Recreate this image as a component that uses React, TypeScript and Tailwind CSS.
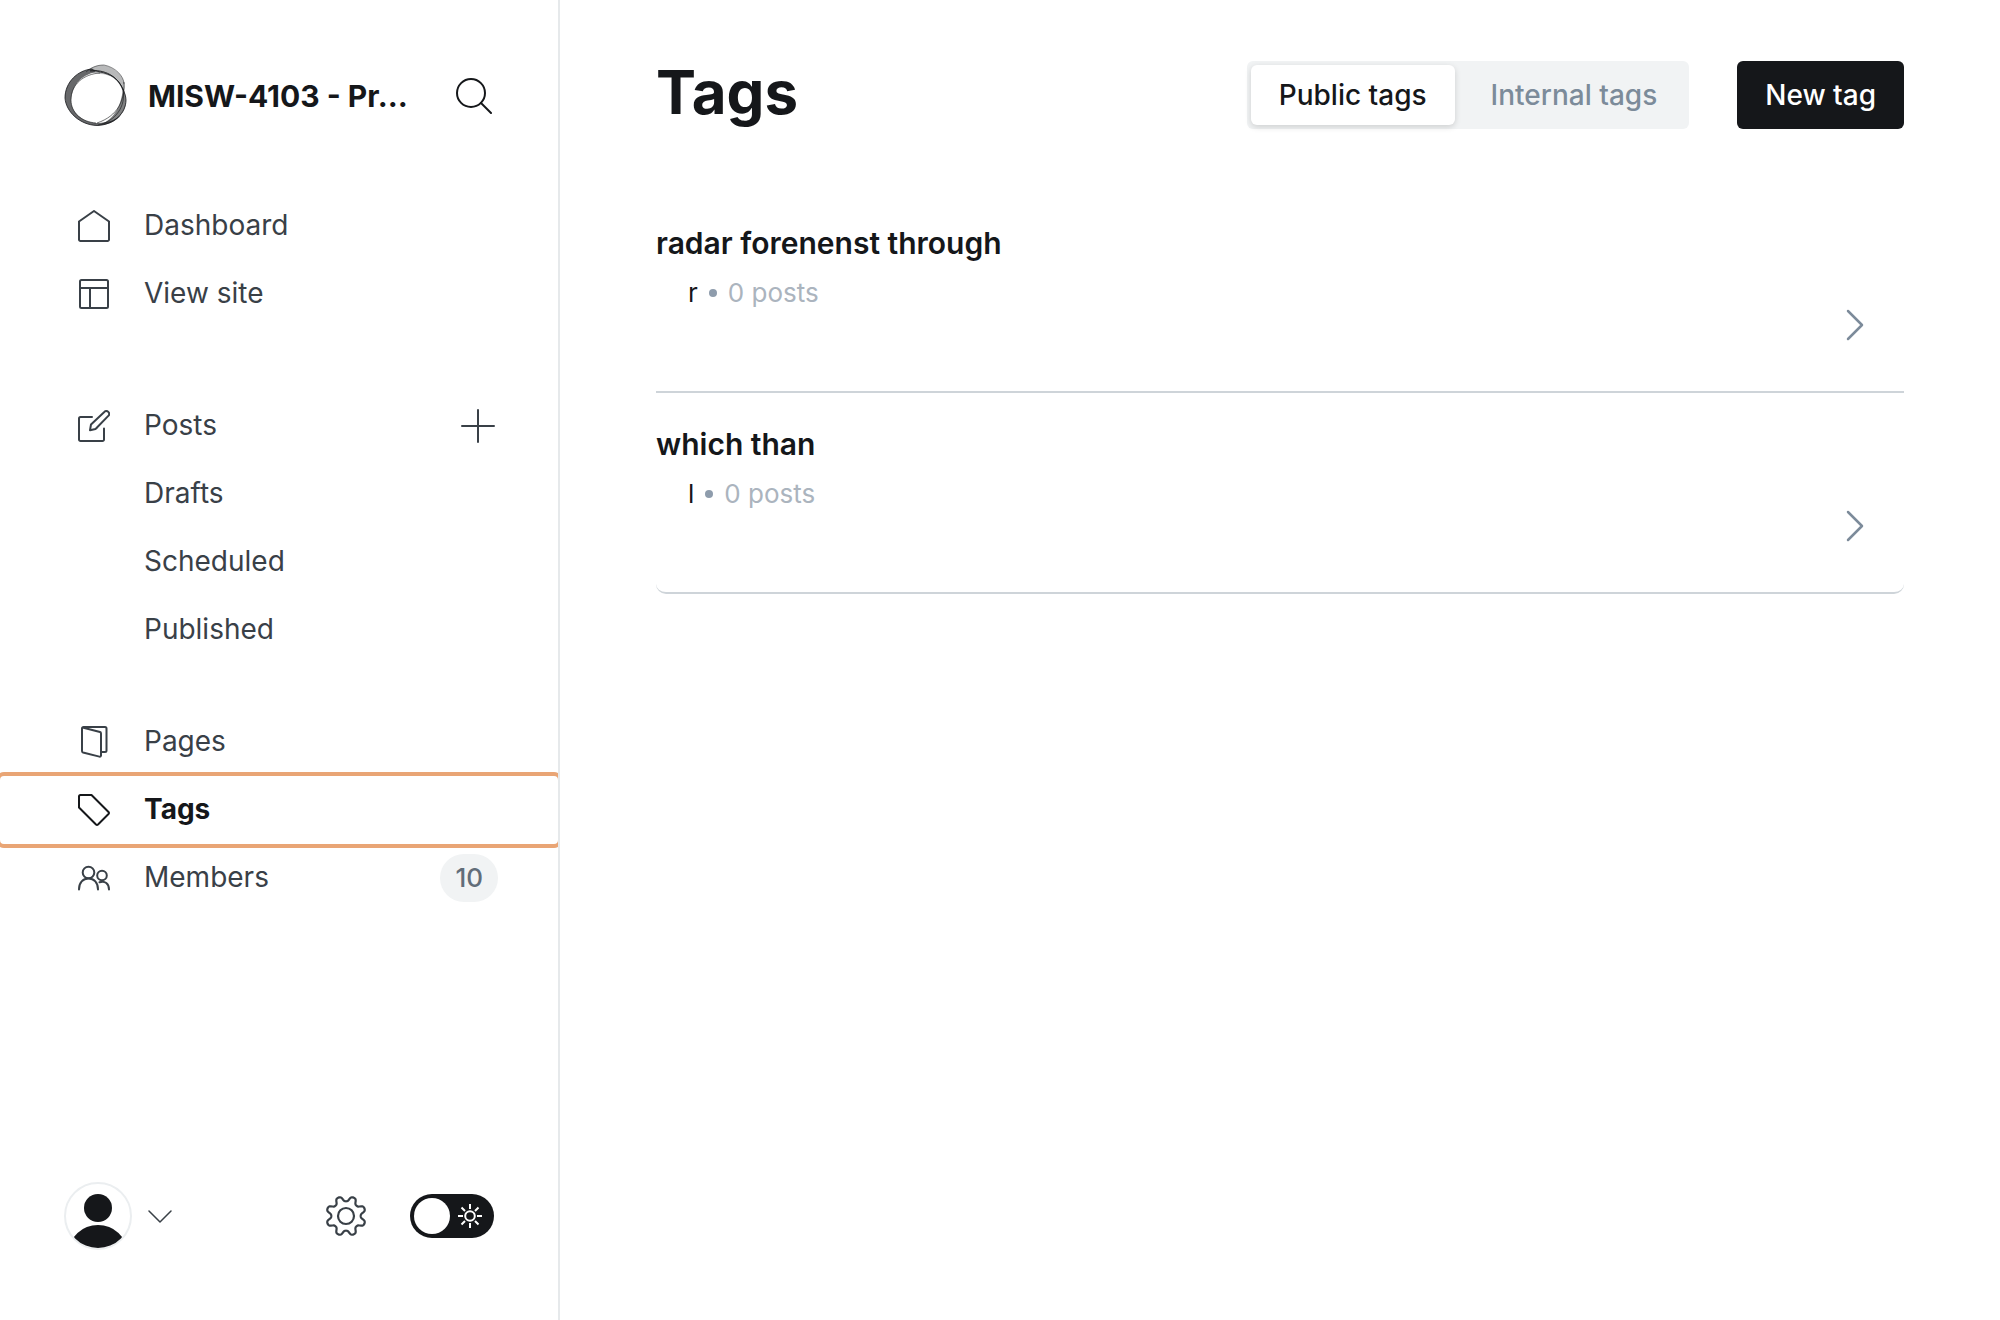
import { useState, type ReactNode } from "react";

const iconProps = {
  viewBox: "0 0 32 32",
  fill: "none",
  stroke: "currentColor",
  strokeWidth: 2,
  strokeLinecap: "round" as const,
  strokeLinejoin: "round" as const,
  className: "size-8 shrink-0",
  "aria-hidden": true,
};

const HomeIcon = () => (
  <svg {...iconProps}>
    <path d="M16 1 31 11.5V29.5a1.5 1.5 0 0 1-1.5 1.5h-27A1.5 1.5 0 0 1 1 29.5V11.5Z" />
  </svg>
);
const SiteIcon = () => (
  <svg {...iconProps}>
    <rect x="2" y="2" width="28" height="28" rx="1.5" />
    <path d="M2 10h28M12 10v20" />
  </svg>
);
const PostsIcon = () => (
  <svg {...iconProps}>
    <path d="M14 7H2.500A1.500 1.500 0 0 0 1 8.500v21A1.500 1.500 0 0 0 2.500 31h22a1.500 1.500 0 0 0 1.500-1.500V18.500" />
    <path d="M19.200 17.500 17.500 19l-5.500 1.200 1-5.700L26.300 1.900a2.800 2.800 0 0 1 4 4L18.500 18" />
  </svg>
);
const PagesIcon = () => (
  <svg {...iconProps}>
    <path d="M5.500 1.800 22 6a1.500 1.500 0 0 1 1 1.400v22a1.200 1.200 0 0 1-1.600 1.200L5 26.500a1.500 1.500 0 0 1-1-1.400V2.500A1.500 1.500 0 0 1 5.500 1H27A1.500 1.500 0 0 1 28.500 2.500v22a1.500 1.500 0 0 1-1.500 1.500H23.500" />
  </svg>
);
const TagIcon = () => (
  <svg {...iconProps}>
    <path d="M1 2.500A1.500 1.500 0 0 1 2.500 1h11L30.500 18a1.500 1.500 0 0 1 0 2L20 30.500a1.500 1.500 0 0 1-2 0L1 13.500Z" />
  </svg>
);
const MembersIcon = () => (
  <svg {...iconProps}>
    <circle cx="10.500" cy="10.500" r="5.800" />
    <path d="M1 27.500c0-7 4-11 9.500-11s9.500 4 9.500 11" />
    <circle cx="24" cy="13.500" r="4.800" />
    <path d="M21.500 20.300c5.500-2 9.500 1.500 9.500 7.200" />
  </svg>
);

const gearPath = (() => {
  const pts: string[] = [];
  const n = 144;
  for (let i = 0; i <= n; i++) {
    const a = (i / n) * Math.PI * 2;
    const w = Math.tanh(1.6 * Math.cos(8 * a + Math.PI)) / Math.tanh(1.6);
    const r = 17.3 + 2.6 * w;
    pts.push(`${(20 + r * Math.cos(a)).toFixed(2)} ${(20 + r * Math.sin(a)).toFixed(2)}`);
  }
  return "M" + pts.join("L") + "Z";
})();

function Logo() {
  return (
    <svg viewBox="0 0 60 60" className="size-15 shrink-0 overflow-visible" fill="none" stroke="#15171a" aria-hidden="true">
      <g fill="#15171a" stroke="none">
        <path fillOpacity="0.65" d="M26 3C12 4-1 16-1 32C0 46 14 59 31 59.500C40 59.500 50 56 55 49C48 55 40 57 30 57C16 56 5 46 5 34C6 20 14 9 30 6Z" />
        <path fillOpacity="0.3" d="M22 4C27 0 32-1 37-1C46 0 56 8 58 16C59 20 59 23 57 26C53 14 45 8 34 8C30 7 26 6 22 4Z" />
        <path fillOpacity="0.55" d="M57 22C61 31 61 39 57 46C52 54 42 59 34 59C46 54 55 43 57 22Z" />
      </g>
      <path strokeWidth="0.600" strokeOpacity="0.8" d="M20 6C27 0 33-1 38-1C49 1 58 10 58 18" />
      <path strokeWidth="0.800" d="M26 3C12 4-1 16-1 32C0 46 14 59 31 59.500C48 59 60 47 60 34C60 30 58 26 57 23C52 12 44 8 34 6C30 5 27 4 26 3" />
      <path strokeWidth="0.600" d="M34 7C18 8 5 18 5 34C5 47 16 56 30 57" />
      <path strokeWidth="0.900" d="M24 5C38 3 52 10 57 24" />
      <path strokeWidth="0.600" d="M58 16C59 34 52 50 31 57M57 24C60 40 50 55 32 59" />
    </svg>
  );
}

function NavItem({ icon, label, active, children }: { icon?: ReactNode; label: string; active?: boolean; children?: ReactNode }) {
  return (
    <li className="flex items-center">
      <a
        href="#"
        aria-current={active ? "page" : undefined}
        className={
          active
            ? "flex h-17 flex-1 items-center gap-[34px] rounded-[4px] pl-[78px] font-bold text-[#15171a] outline-4 outline-[#e9a575]"
            : "flex h-17 flex-1 items-center gap-[34px] pl-[78px] text-[#394047]"
        }
      >
        {icon ?? <span className="w-8" />}
        <span className="pb-0.5">{label}</span>
      </a>
      {children}
    </li>
  );
}

const tags = [
  { name: "radar forenenst through", slug: "r", posts: 0 },
  { name: "which than", slug: "l", posts: 0 },
];

export default function App() {
  const [tab, setTab] = useState("public");
  const [night, setNight] = useState(false);
  const tabOn = "h-15 rounded-md bg-white px-7 text-[#15171a] shadow-[0_2px_6px_rgba(0,0,0,0.15)]";
  const tabOff = "h-15 rounded-md px-7 text-[#7c8b9a]";
  return (
    <div className="flex min-h-screen bg-white font-['Inter',sans-serif] text-[28px] leading-9 text-[#15171a]">
      <aside className="flex w-[560px] shrink-0 flex-col overflow-hidden border-r-2 border-[#e6e9eb]">
        <header className="flex items-center pt-[66px] pr-[66px] pl-[66px]">
          <Logo />
          <span className="ml-[22px] flex-1 truncate text-[30px] font-bold">MISW-4103 - Pr…</span>
          <button type="button" aria-label="Search" className="size-9">
            <svg viewBox="0 0 36 36" className="size-9" fill="none" stroke="currentColor" strokeWidth="2" strokeLinecap="round">
              <circle cx="15" cy="15" r="14" />
              <path d="m25 25 10 10" />
            </svg>
          </button>
        </header>

        <nav className="pt-[66px]">
          <ul>
            <NavItem icon={<HomeIcon />} label="Dashboard" />
            <NavItem icon={<SiteIcon />} label="View site" />
          </ul>
          <ul className="mt-16">
            <NavItem icon={<PostsIcon />} label="Posts">
              <button type="button" aria-label="New post" className="mr-[63px] text-[#394047]">
                <svg viewBox="0 0 34 34" className="size-[34px]" fill="none" stroke="currentColor" strokeWidth="2" strokeLinecap="round">
                  <path d="M17 1v32M1 17h32" />
                </svg>
              </button>
            </NavItem>
            <NavItem label="Drafts" />
            <NavItem label="Scheduled" />
            <NavItem label="Published" />
          </ul>
          <ul className="mt-11">
            <NavItem icon={<PagesIcon />} label="Pages" />
            <NavItem icon={<TagIcon />} label="Tags" active />
            <NavItem icon={<MembersIcon />} label="Members">
              <span className="mr-15 flex h-12 items-center rounded-full bg-[#f1f3f4] px-[15px] text-[26px] font-medium text-[#626d79]">
                10
              </span>
            </NavItem>
          </ul>
        </nav>

        <footer className="mt-auto flex items-center pr-16 pb-[70px] pl-16">
          <button type="button" aria-label="Account menu" className="flex items-center gap-4">
            <svg viewBox="0 0 68 68" className="size-17">
              <defs>
                <clipPath id="avatar">
                  <circle cx="34" cy="34" r="32" />
                </clipPath>
              </defs>
              <circle cx="34" cy="34" r="33" fill="#fff" stroke="#ebeef0" strokeWidth="2" />
              <g clipPath="url(#avatar)" fill="#15171a">
                <circle cx="34" cy="26" r="14" />
                <ellipse cx="34" cy="70" rx="29" ry="27" />
              </g>
            </svg>
            <svg viewBox="0 0 24 14" className="h-[14px] w-6" fill="none" stroke="#394047" strokeWidth="1.500" strokeLinecap="round" strokeLinejoin="round">
              <path d="m1 2 11 11 11-11" />
            </svg>
          </button>
          <button type="button" aria-label="Settings" className="mr-11 ml-auto text-[#394047]">
            <svg viewBox="0 0 40 40" className="size-10 overflow-visible" fill="none" stroke="currentColor" strokeWidth="2.200" strokeLinejoin="round">
              <circle cx="20" cy="20" r="8" />
              <path d={gearPath} />
            </svg>
          </button>
          <label className="relative block h-11 w-21 cursor-pointer rounded-full bg-[#15171a]">
            <input
              type="checkbox"
              aria-label="Dark mode"
              checked={night}
              onChange={(e) => setNight(e.target.checked)}
              className="absolute inset-0 size-full cursor-pointer appearance-none rounded-full"
            />
            <span className={night ? "absolute top-1 right-1 size-9 rounded-full bg-white" : "absolute top-1 left-1 size-9 rounded-full bg-white"} />
            <svg
              viewBox="0 0 24 24"
              className={night ? "absolute top-[10px] left-3 size-6" : "absolute top-[10px] right-3 size-6"}
              fill="none"
              stroke="#fff"
              strokeWidth="2"
            >
              <circle cx="12" cy="12" r="4.800" />
              <path d="M12 0v5M12 19v5M0 12h5M19 12h5M3.500 3.500l3.500 3.500M17 17l3.500 3.500M3.500 20.500l3.500-3.500M17 7l3.500-3.500" />
            </svg>
          </label>
        </footer>
      </aside>

      <main className="min-w-0 flex-1 px-24 pt-[61px]">
        <header className="flex items-start">
          <h1 className="text-[60px] leading-[62px] font-bold">Tags</h1>
          <div className="ml-auto flex items-center gap-2 rounded-md bg-[#f1f3f4] p-1 font-medium">
            <button type="button" aria-pressed={tab === "public"} onClick={() => setTab("public")} className={tab === "public" ? tabOn : tabOff}>
              Public tags
            </button>
            <button type="button" aria-pressed={tab === "internal"} onClick={() => setTab("internal")} className={tab === "internal" ? tabOn : tabOff}>
              Internal tags
            </button>
          </div>
          <button type="button" className="ml-12 h-17 rounded-md bg-[#15171a] px-7 font-medium text-white">
            New tag
          </button>
        </header>

        <ul className="mt-[63px]">
          {tags.map((tag) => (
            <li key={tag.name} className="border-b-2 border-[#ced4d9] last:rounded-b-[10px]">
              <a href="#" className="flex items-center pr-10">
                <div className="flex-1 pt-[31px] pb-[78px]">
                  <h3 className="text-[30px] leading-10 font-semibold">{tag.name}</h3>
                  <p className="mt-[10px] flex items-center gap-[11px] pl-8 text-[26px] leading-10">
                    <span>{tag.slug}</span>
                    <span className="size-2 rounded-full bg-[#8e9cac]" />
                    <span className="text-[#abb4be]">{tag.posts} posts</span>
                  </p>
                </div>
                <svg viewBox="0 0 18 32" className="mt-[66px] h-8 w-[18px]" fill="none" stroke="#7c8b9a" strokeWidth="2.500" strokeLinecap="round" strokeLinejoin="round">
                  <path d="m2 2 14 14L2 30" />
                </svg>
              </a>
            </li>
          ))}
        </ul>
      </main>
    </div>
  );
}
